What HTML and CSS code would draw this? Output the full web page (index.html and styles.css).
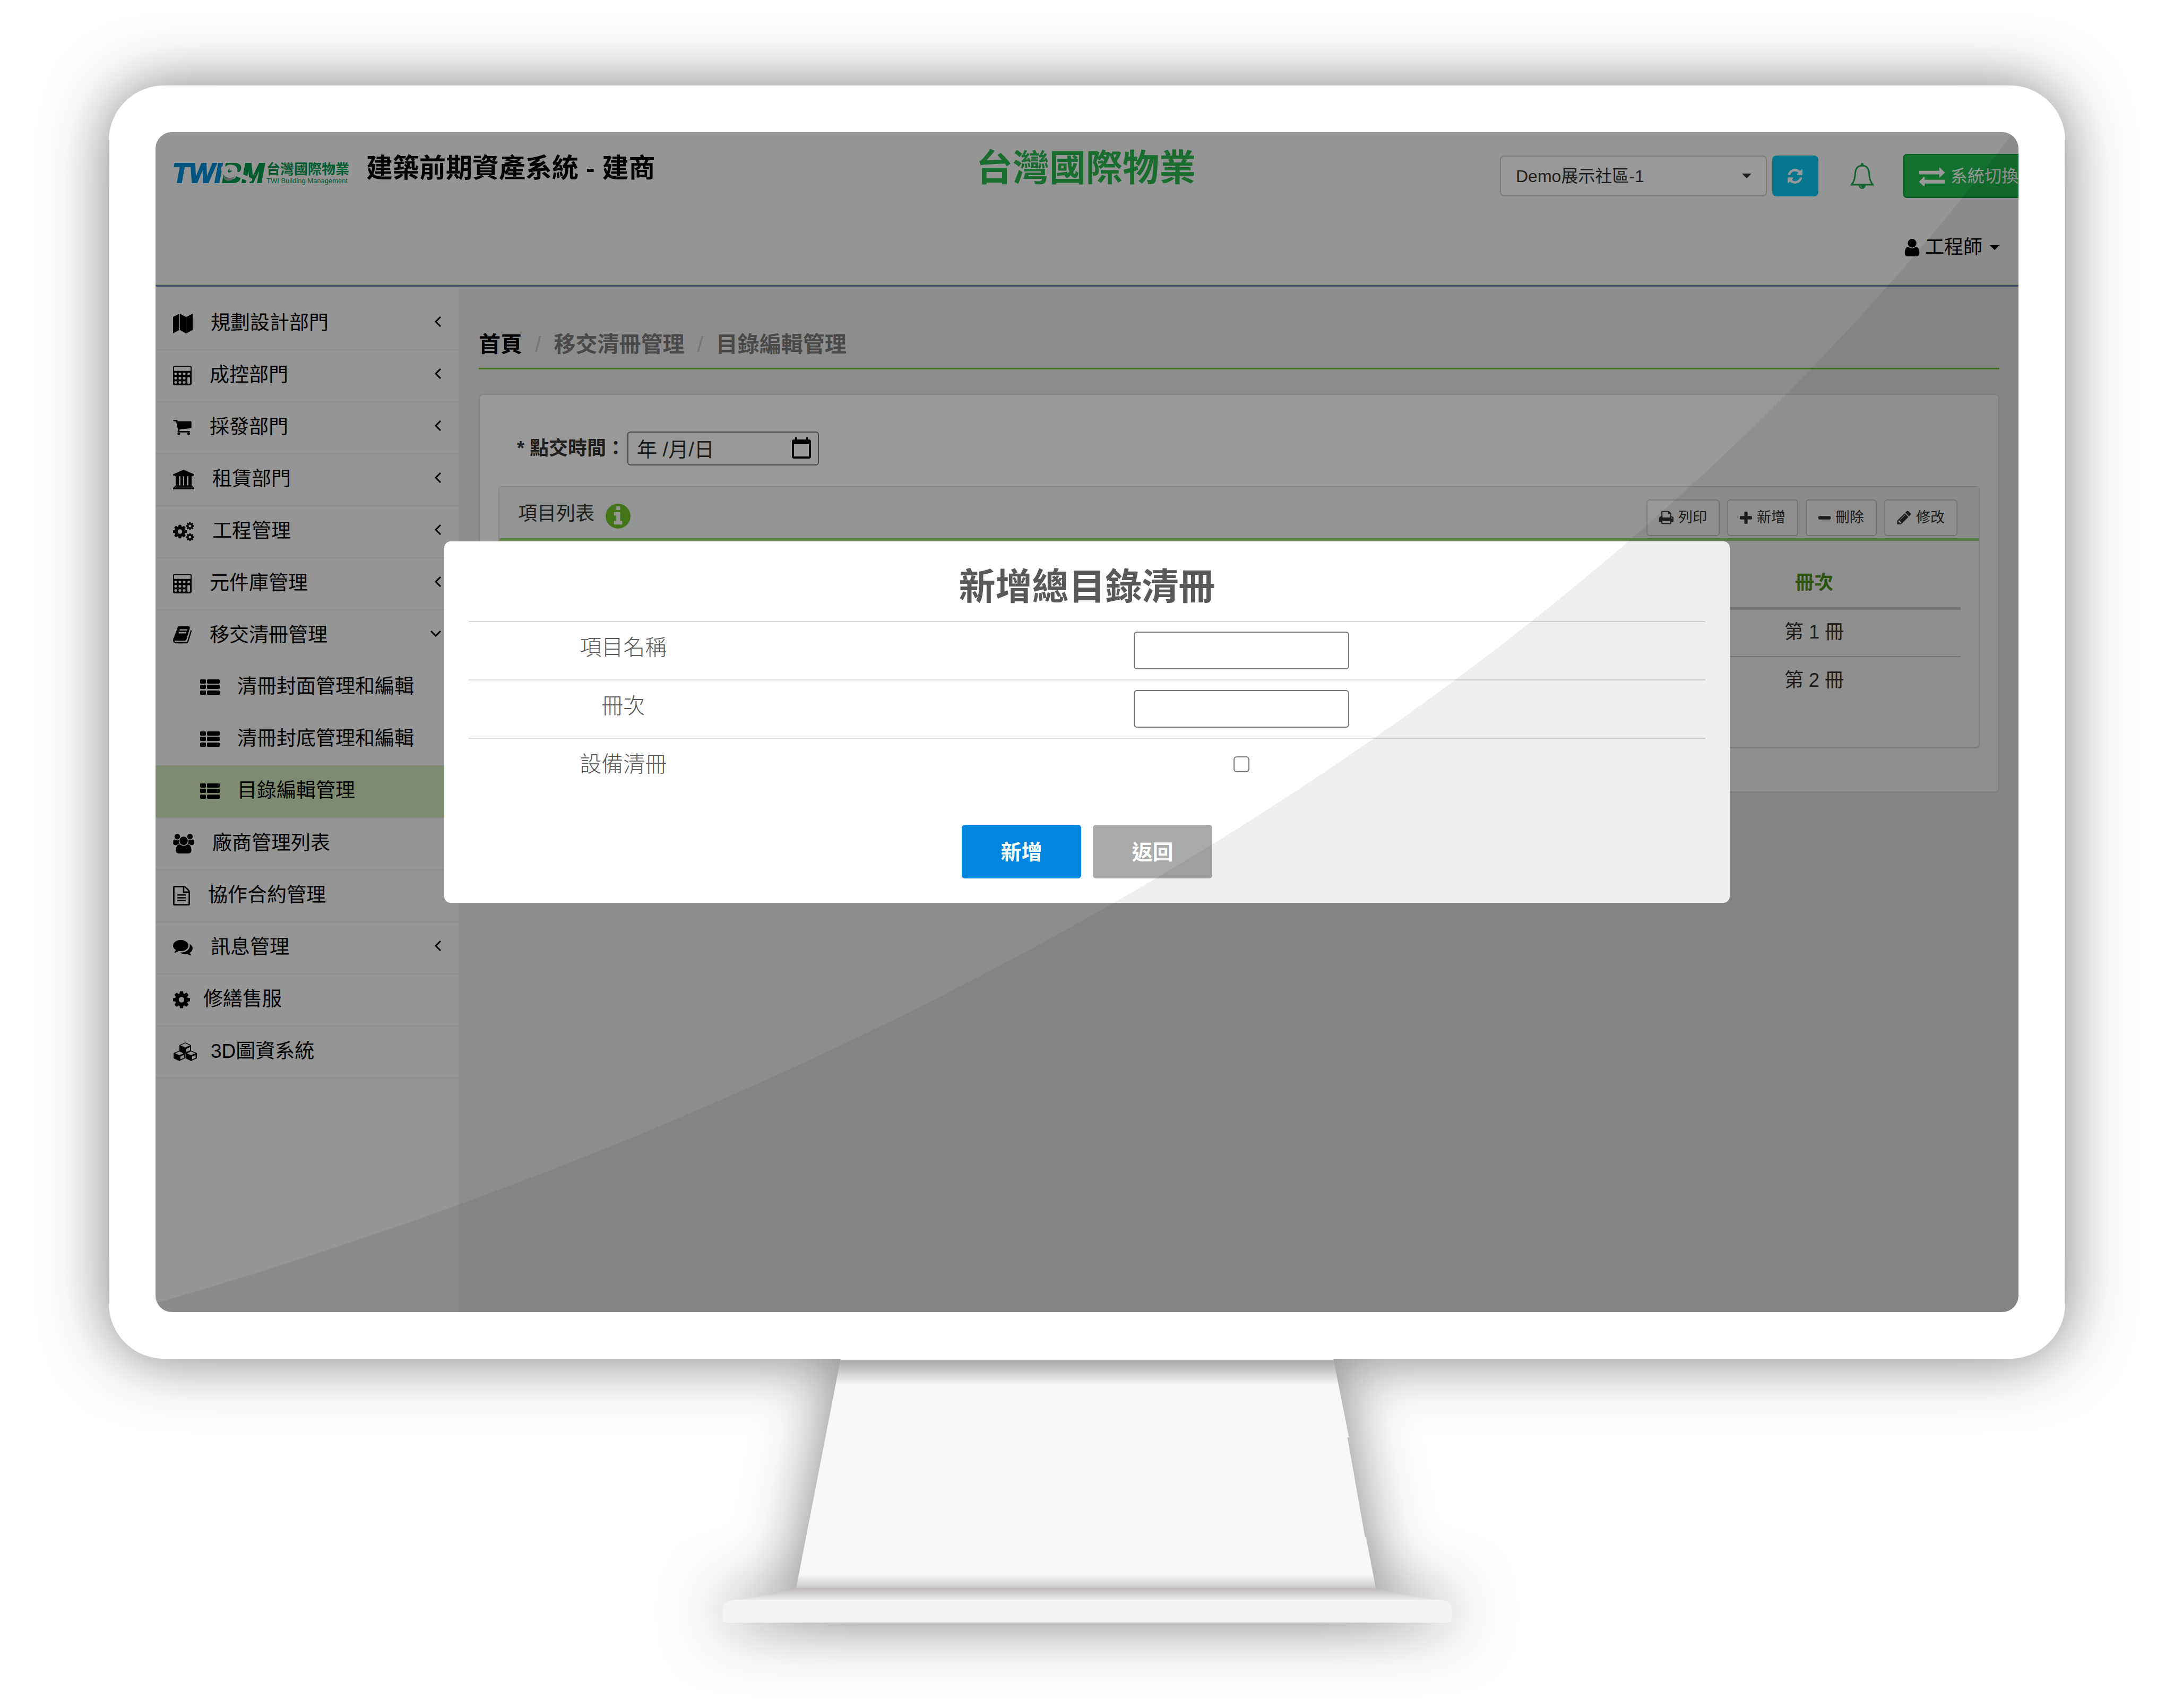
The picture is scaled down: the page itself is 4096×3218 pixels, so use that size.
FILE: index.html
```html
<!DOCTYPE html>
<html lang="zh-Hant">
<head>
<meta charset="utf-8">
<meta name="viewport" content="width=device-width, initial-scale=1">
<title>建築前期資產系統 - 建商</title>
<link rel="stylesheet" href="styles.css">
</head>
<body>
<svg class="sprite" aria-hidden="true">
  <symbol id="cog" viewBox="128 128 1536 1536"><path d="M1152 896q0-106-75-181t-181-75-181 75-75 181 75 181 181 75 181-75 75-181zm512-109v222q0 12-8 23t-20 13l-185 28q-19 54-39 91 35 50 107 138 10 12 10 25t-9 23q-27 37-99 108t-94 71q-12 0-26-9l-138-108q-44 23-91 38-16 136-29 186-7 28-36 28h-222q-14 0-24.500-8.500t-11.500-21.500l-28-184q-49-16-90-37l-141 107q-10 9-25 9-14 0-25-11-126-114-165-168-7-10-7-23 0-12 8-23 15-21 51-66.500t54-70.500q-27-50-41-99l-183-27q-13-2-21-12.500t-8-23.500v-222q0-12 8-23t19-13l186-28q14-46 39-92-40-57-107-138-10-12-10-24 0-10 9-23 26-36 98.500-107.500t94.500-71.500q13 0 26 10l138 107q44-23 91-38 16-136 29-186 7-28 36-28h222q14 0 24.500 8.500t11.500 21.500l28 184q49 16 90 37l142-107q9-9 24-9 13 0 25 10 129 119 165 170 7 8 7 22 0 12-8 23-15 21-51 66.500t-54 70.500q26 50 41 98l183 28q13 2 21 12.500t8 23.500z"/></symbol>
  <symbol id="cogs" viewBox="0 0 40 36"><use href="#cog" x="0" y="5" width="26" height="26"/><use href="#cog" x="24" y="0" width="16" height="15"/><use href="#cog" x="24" y="21" width="16" height="15"/></symbol>
  <symbol id="map" viewBox="0 0 37 30" preserveAspectRatio="none"><path d="M0 5l12-5v25L0 30zM13 0l11 5v25l-11-5zM25 5l12-5v25l-12 5z"/></symbol>
  <symbol id="calculator" viewBox="0 0 35 30" preserveAspectRatio="none"><path fill-rule="evenodd" d="M3 0h29q3 0 3 3v24q0 3-3 3H3q-3 0-3-3V3q0-3 3-3zM3 2q-1 0-1 1v5h31V3q0-1-1-1z"/><g class="keys"><ellipse cx="5" cy="12.500" rx="2.600" ry="2"/><ellipse cx="13" cy="12.500" rx="2.600" ry="2"/><ellipse cx="21" cy="12.500" rx="2.600" ry="2"/><ellipse cx="29.500" cy="12.500" rx="2.600" ry="2"/><ellipse cx="5" cy="19" rx="2.600" ry="2"/><ellipse cx="13" cy="19" rx="2.600" ry="2"/><ellipse cx="21" cy="19" rx="2.600" ry="2"/><ellipse cx="5" cy="25.500" rx="2.600" ry="2"/><ellipse cx="13" cy="25.500" rx="2.600" ry="2"/><ellipse cx="21" cy="25.500" rx="2.600" ry="2"/><rect x="27" y="17" width="5" height="11" rx="2"/></g></symbol>
  <symbol id="cart" viewBox="64 256 1664 1408"><path d="M704 1536q0 52-38 90t-90 38-90-38-38-90 38-90 90-38 90 38 38 90zm896 0q0 52-38 90t-90 38-90-38-38-90 38-90 90-38 90 38 38 90zm128-1088v512q0 24-16.500 42.500t-40.500 21.500l-1044 122q13 60 13 70 0 16-24 64h920q26 0 45 19t19 45-19 45-45 19h-1024q-26 0-45-19t-19-45q0-11 8-31.500t16-36 21.500-40 15.500-29.500l-177-823h-204q-26 0-45-19t-19-45 19-45 45-19h256q16 0 28.500 6.500t19.500 15.500 13 24.500 8 26 5.500 29.500 4.500 26h1201q26 0 45 19t19 45z"/></symbol>
  <symbol id="bank" viewBox="0 0 40 30" preserveAspectRatio="none"><path d="M20 0l20 7v2h-3q0 1-1 1H4q-1 0-1-1H0V7zM5 10h6v14h3V10h5v14h2V10h5v14h3V10h6v14q2 0 2 2H3q0-2 2-2zM1 27h38q1 0 1 1v2H0v-2q0-1 1-1z"/></symbol>
  <symbol id="book" viewBox="60 256 1668 1408"><path d="M1703 478q40 57 18 129l-275 906q-19 64-76.500 107.500t-122.500 43.500h-923q-77 0-148.500-53.500t-99.500-131.500q-24-67-2-127 0-4 3-27t4-37q1-8-3-21.500t-3-19.500q2-11 8-21t16.500-23.500 16.500-23.500q23-38 45-91.500t30-91.500q3-10 .5-30t-.5-28q3-11 17-28t17-23q21-36 42-92t25-90q1-9-2.500-32t.5-28q4-13 22-30.500t22-22.500q19-26 42.500-84.500t27.500-96.500q1-8-3-25.500t-2-26.500q2-8 9-18t18-23 17-21q8-12 16.500-30.500t15-35 16-36 19.500-32 26.500-23.500 36-11.500 47.500 5.500l-1 3q38-9 51-9h761q74 0 114 56t18 130l-274 906q-36 119-71.500 153.500t-128.500 34.500h-869q-27 0-38 15-11 16-1 43 24 70 144 70h923q29 0 56-15.500t35-41.500l300-987q7-22 5-57 38 15 59 43zm-1064 2q-4 13 2 22.500t20 9.500h608q13 0 25.500-9.500t16.500-22.500l21-64q4-13-2-22.500t-20-9.500h-608q-13 0-25.500 9.500t-16.500 22.500zm-83 256q-4 13 2 22.500t20 9.500h608q13 0 25.500-9.500t16.500-22.500l21-64q4-13-2-22.500t-20-9.500h-608q-13 0-25.500 9.500t-16.500 22.500z"/></symbol>
  <symbol id="list" viewBox="0 0 37 29"><rect width="11" height="8" rx="2"/><rect x="13" width="24" height="8" rx="2"/><rect y="10" width="11" height="8" rx="2"/><rect x="13" y="10" width="24" height="8" rx="2"/><rect y="21" width="11" height="8" rx="2"/><rect x="13" y="21" width="24" height="8" rx="2"/></symbol>
  <symbol id="users" viewBox="-64 0 1920 1792"><path d="M529 896q-162 5-265 128h-134q-82 0-138-40.500t-56-118.500q0-353 124-353 6 0 43.500 21t97.500 42.500 119 21.500q67 0 133-23-5 37-5 66 0 143 83 264zm1071 637q0 120-73 189.500t-194 69.500h-874q-121 0-194-69.500t-73-189.500q0-53 3.500-103.500t14-109 26.500-108.500 43-97.500 62-81 85.500-53.500 111.500-20q10 0 43 21.500t73 48 107 48 135 21.500 135-21.500 107-48 73-48 43-21.500q61 0 111.500 20t85.500 53.500 62 81 43 97.500 26.500 108.500 14 109 3.500 103.500zm-1024-1277q0 106-75 181t-181 75-181-75-75-181 75-181 181-75 181 75 75 181zm704 384q0 159-112.500 271.500t-271.500 112.500-271.500-112.500-112.500-271.500 112.500-271.500 271.500-112.500 271.500 112.500 112.500 271.500zm576 225q0 78-56 118.500t-138 40.500h-134q-103-123-265-128 83-121 83-264 0-29-5-66 66 23 133 23 59 0 119-21.500t97.500-42.500 43.500-21q124 0 124 353zm-128-609q0 106-75 181t-181 75-181-75-75-181 75-181 181-75 181 75 75 181z"/></symbol>
  <symbol id="file" viewBox="128 0 1536 1792"><path d="M1596 380q28 28 48 76t20 88v1152q0 40-28 68t-68 28h-1344q-40 0-68-28t-28-68v-1600q0-40 28-68t68-28h896q40 0 88 20t76 48zm-444-244v376h376q-10-29-22-41l-313-313q-12-12-41-22zm384 1528v-1024h-416q-40 0-68-28t-28-68v-416h-768v1536h1280zm-1024-864q0-14 9-23t23-9h704q14 0 23 9t9 23v64q0 14-9 23t-23 9h-704q-14 0-23-9t-9-23v-64zm736 224q14 0 23 9t9 23v64q0 14-9 23t-23 9h-704q-14 0-23-9t-9-23v-64q0-14 9-23t23-9h704zm0 256q14 0 23 9t9 23v64q0 14-9 23t-23 9h-704q-14 0-23-9t-9-23v-64q0-14 9-23t23-9h704z"/></symbol>
  <symbol id="comments" viewBox="0 256 1792 1408"><path d="M1408 768q0 139-94 257t-256.500 186.500-353.500 68.500q-86 0-176-16-124 88-278 128-36 9-86 16h-3q-11 0-20.500-8t-11.500-21q-1-3-1-6.500t.5-6.500 2-6l2.500-5 3.500-5.500 4-5 4.500-5 4-4.500q5-6 23-25t26-29.500 22.500-29 25-38.500 20.500-44q-124-72-195-177t-71-224q0-139 94-257t256.500-186.500 353.500-68.500 353.500 68.500 256.500 186.500 94 257zm384 256q0 120-71 224.500t-195 176.500q10 24 20.500 44t25 38.500 22.500 29 26 29.500 23 25q1 1 4 4.500t4.500 5 4 5 3.500 5.500l2.500 5 2 6 .5 6.500-1 6.500q-3 14-13 22t-22 7q-50-7-86-16-154-40-278-128-90 16-176 16-271 0-472-132 58 4 88 4 161 0 309-45t264-129q125-92 192-212t67-254q0-77-23-152 129 71 204 178t75 230z"/></symbol>
  <symbol id="cubes" viewBox="0 0 46 38"><path d="M12 7l11-5 11 5v11l-11 5-11-5zM1 22L12 17.500 22.500 22v10L12 37 1 32zM23.500 22L34 17.500 45 22v10L34 37 23.500 32z"/><path class="face" d="M14 7.500l9-4 9 4-9 4zM25 14l7-3v6l-7 3zM4 22.500l8-3.500 8 3.500-8 3.500zM14 28.500l6.500-3v5.500l-6.500 3zM26 22.500l8-3.500 8 3.500-8 3.500zM36 28.500l6.500-3v5.500l-6.500 3z"/></symbol>
  <symbol id="refresh" viewBox="128 128 1536 1536"><path d="M1639 1056q0 5-1 7-64 268-268 434.500t-478 166.500q-146 0-282.500-55t-243.500-157l-129 129q-19 19-45 19t-45-19-19-45v-448q0-26 19-45t45-19h448q26 0 45 19t19 45-19 45l-137 137q71 66 161 102t187 36q134 0 250-65t186-179q11-17 53-117 8-23 30-23h192q13 0 22.500 9.500t9.500 22.500zm25-800v448q0 26-19 45t-45 19h-448q-26 0-45-19t-19-45 19-45l138-138q-148-137-349-137-134 0-250 65t-186 179q-11 17-53 117-8 23-30 23h-199q-13 0-22.500-9.500t-9.500-22.500v-7q65-268 270-434.500t480-166.500q146 0 284 55.500t245 156.500l130-129q19-19 45-19t45 19 19 45z"/></symbol>
  <symbol id="bell" viewBox="0 0 45 49"><path class="outline" d="M22.500 5C14 5 10 11 9.500 19 9 30 7 35 2.500 41h40C38 35 36 30 35.500 19 35 11 31 5 22.500 5z"/><path d="M20 5V2.500a2.500 2.500 0 0 1 5 0V5zM16 42h13a6.500 7 0 0 1-13 0z"/><path class="outline thin" d="M19.500 43q.5 3 3 3"/></symbol>
  <symbol id="exchange" viewBox="0 256 1792 1280"><path d="M1792 1184v192q0 13-9.500 22.500t-22.500 9.500h-1376v192q0 13-9.500 22.500t-22.500 9.500q-12 0-24-10l-319-320q-9-9-9-22 0-14 9-23l320-320q9-9 23-9 13 0 22.500 9.500t9.500 22.500v192h1376q13 0 22.500 9.500t9.500 22.500zm0-544q0 14-9 23l-320 320q-9 9-23 9-13 0-22.500-9.500t-9.500-22.500v-192h-1376q-13 0-22.500-9.500t-9.500-22.500v-192q0-13 9.500-22.500t22.500-9.500h1376v-192q0-14 9-23t23-9q12 0 24 10l319 319q9 9 9 23z"/></symbol>
  <symbol id="user" viewBox="256 128 1280 1536"><path d="M1536 1399q0 109-62.500 187t-150.500 78h-854q-88 0-150.500-78t-62.500-187q0-85 8.500-160.500t31.500-152 58.500-131 94-89 134.500-34.500q131 128 313 128t313-128q76 0 134.500 34.500t94 89 58.500 131 31.500 152 8.500 160.500zm-256-887q0 159-112.500 271.500t-271.500 112.500-271.500-112.500-112.500-271.500 112.500-271.500 271.500-112.500 271.500 112.500 112.500 271.500z"/></symbol>
  <symbol id="calendar" viewBox="0 0 36 40"><path fill-rule="evenodd" d="M6 0h4v4h16V0h4v4h2q4 0 4 4v28q0 4-4 4H4q-4 0-4-4V8q0-4 4-4h2zM4 13v23h28V13z"/></symbol>
  <symbol id="info" viewBox="128 128 1536 1536"><path d="M1152 1376v-160q0-14-9-23t-23-9h-96v-512q0-14-9-23t-23-9h-320q-14 0-23 9t-9 23v160q0 14 9 23t23 9h96v320h-96q-14 0-23 9t-9 23v160q0 14 9 23t23 9h448q14 0 23-9t9-23zm-128-896v-160q0-14-9-23t-23-9h-192q-14 0-23 9t-9 23v160q0 14 9 23t23 9h192q14 0 23-9t9-23zm640 416q0 209-103 385.500t-279.500 279.500-385.500 103-385.500-103-279.500-279.500-103-385.500 103-385.500 279.500-279.500 385.500-103 385.500 103 279.500 279.500 103 385.500z"/></symbol>
  <symbol id="print" viewBox="64 128 1664 1536"><path d="M448 1536h896v-256h-896v256zm0-640h896v-384h-160q-40 0-68-28t-28-68v-160h-640v640zm1152 64q0-26-19-45t-45-19-45 19-19 45 19 45 45 19 45-19 19-45zm128 0v416q0 13-9.500 22.500t-22.500 9.500h-224v160q0 40-28 68t-68 28h-960q-40 0-68-28t-28-68v-160h-224q-13 0-22.500-9.500t-9.500-22.500v-416q0-79 56.500-135.500t135.500-56.500h64v-544q0-40 28-68t68-28h672q40 0 88 20t76 48l152 152q28 28 48 76t20 88v256h64q79 0 135.500 56.500t56.500 135.500z"/></symbol>
  <symbol id="plus" viewBox="192 128 1408 1408"><path d="M1600 736v192q0 40-28 68t-68 28h-416v416q0 40-28 68t-68 28h-192q-40 0-68-28t-28-68v-416h-416q-40 0-68-28t-28-68v-192q0-40 28-68t68-28h416v-416q0-40 28-68t68-28h192q40 0 68 28t28 68v416h416q40 0 68 28t28 68z"/></symbol>
  <symbol id="minus" viewBox="192 128 1408 1408"><rect x="192" y="640" width="1408" height="384" rx="96"/></symbol>
  <symbol id="pencil" viewBox="128 128 1536 1536"><path d="M491 1536l91-91-235-235-91 91v107h128v128h107zm523-928q0-22-22-22-10 0-17 7l-542 542q-7 7-7 17 0 22 22 22 10 0 17-7l542-542q7-7 7-17zm-54-192l416 416-832 832h-416v-416zm683 96q0 53-37 90l-166 166-416-416 166-165q36-38 90-38 53 0 91 38l235 234q37 39 37 91z"/></symbol>
  <symbol id="left" viewBox="0 0 12 20"><path class="stroke" d="M11 1L2 10l9 9"/></symbol>
  <symbol id="down" viewBox="0 0 20 12"><path class="stroke" d="M1 1l9 9 9-9"/></symbol>
</svg>

<div class="monitor">
  <div class="screen">
    <header class="topbar">
      <div class="topbar-main">
        <div class="brand">
          <a class="logo" href="#">
            <span class="logo-mark"><span class="logo-twi">TWI</span><span class="logo-bm">BM</span>
              <svg class="logo-key" viewBox="0 0 62 36" aria-hidden="true"><path class="key-shadow" d="M6 22q7 8 20 2l4-5-6 10q-6 4-13 2-5-3-5-9z"/><path class="key" fill-rule="evenodd" d="M1 9q0-5 5-5l3 1Q17-1 25 2q9 3 7 12l25 12q4 1 3 5-2 3-6 2L27 22q-7 6-15 3-6-2-7-10-4-1-4-6zm15 7q4 0 7-4 2-4-1-5-4 0-7 4-2 4 1 5z"/></svg>
            </span>
            <span class="logo-text"><b>台灣國際物業</b><small>TWI Building Management</small></span>
          </a>
          <h1 class="app-title">建築前期資產系統 - 建商</h1>
        </div>
        <h2 class="company">台灣國際物業</h2>
        <div class="controls">
          <select class="site-select" aria-label="社區"><option>Demo展示社區-1</option></select>
          <button class="refresh" type="button" aria-label="重新整理"><svg class="i-refresh"><use href="#refresh"/></svg></button>
          <button class="bell" type="button" aria-label="通知"><svg class="i-bell"><use href="#bell"/></svg></button>
          <button class="switch" type="button"><svg class="i-exchange"><use href="#exchange"/></svg>系統切換</button>
        </div>
      </div>
      <a class="user-menu" href="#"><svg class="i-user"><use href="#user"/></svg>工程師<span class="caret"></span></a>
    </header>

    <div class="columns">
      <nav class="sidebar">
        <ul class="menu">
          <li><a href="#"><svg class="w-37"><use href="#map"/></svg>規劃設計部門<svg class="chevron"><use href="#left"/></svg></a></li>
          <li><a href="#"><svg class="w-35"><use href="#calculator"/></svg>成控部門<svg class="chevron"><use href="#left"/></svg></a></li>
          <li><a href="#"><svg class="w-35 low"><use href="#cart"/></svg>採發部門<svg class="chevron"><use href="#left"/></svg></a></li>
          <li><a href="#"><svg class="w-40"><use href="#bank"/></svg>租賃部門<svg class="chevron"><use href="#left"/></svg></a></li>
          <li><a href="#"><svg class="w-40"><use href="#cogs"/></svg>工程管理<svg class="chevron"><use href="#left"/></svg></a></li>
          <li><a href="#"><svg class="w-35"><use href="#calculator"/></svg>元件庫管理<svg class="chevron"><use href="#left"/></svg></a></li>
          <li class="open"><a href="#"><svg class="w-35"><use href="#book"/></svg>移交清冊管理<svg class="chevron wide"><use href="#down"/></svg></a>
            <ul class="submenu">
              <li><a href="#"><svg class="w-37"><use href="#list"/></svg>清冊封面管理和編輯</a></li>
              <li><a href="#"><svg class="w-37"><use href="#list"/></svg>清冊封底管理和編輯</a></li>
              <li class="active"><a href="#"><svg class="w-37"><use href="#list"/></svg>目錄編輯管理</a></li>
            </ul>
          </li>
          <li><a href="#"><svg class="w-40"><use href="#users"/></svg>廠商管理列表</a></li>
          <li><a href="#"><svg class="w-32"><use href="#file"/></svg>協作合約管理</a></li>
          <li><a href="#"><svg class="w-37"><use href="#comments"/></svg>訊息管理<svg class="chevron"><use href="#left"/></svg></a></li>
          <li><a class="tight" href="#"><svg class="w-32"><use href="#cog"/></svg>修繕售服</a></li>
          <li><a class="tight" href="#"><svg class="w-46"><use href="#cubes"/></svg>3D圖資系統</a></li>
        </ul>
      </nav>

      <main class="content">
        <ol class="breadcrumb">
          <li><a href="#">首頁</a></li>
          <li>移交清冊管理</li>
          <li>目錄編輯管理</li>
        </ol>
        <section class="panel">
          <div class="date-row">
            <label for="handover">* 點交時間：</label>
            <div class="date-field"><input id="handover" type="text" value="年 /月/日"><svg class="i-calendar" aria-hidden="true"><use href="#calendar"/></svg></div>
          </div>
          <div class="card">
            <div class="card-head">
              <h3>項目列表</h3><svg class="i-info"><use href="#info"/></svg>
              <div class="actions">
                <button type="button"><svg><use href="#print"/></svg>列印</button>
                <button type="button"><svg class="small"><use href="#plus"/></svg>新增</button>
                <button type="button"><svg class="small"><use href="#minus"/></svg>刪除</button>
                <button type="button"><svg><use href="#pencil"/></svg>修改</button>
              </div>
            </div>
            <div class="card-body">
              <table class="items">
                <thead><tr><td></td><th scope="col">冊次</th></tr></thead>
                <tbody>
                  <tr><td></td><td>第 1 冊</td></tr>
                  <tr><td></td><td>第 2 冊</td></tr>
                </tbody>
              </table>
            </div>
          </div>
        </section>
      </main>
    </div>

    <div class="backdrop">
      <form class="modal" role="dialog" aria-labelledby="dialog-title">
        <h2 id="dialog-title">新增總目錄清冊</h2>
        <div class="field"><label for="item-name">項目名稱</label><div class="value"><input class="text" id="item-name" type="text"></div></div>
        <div class="field"><label for="volume">冊次</label><div class="value"><input class="text" id="volume" type="text"></div></div>
        <div class="field"><label for="equipment">設備清冊</label><div class="value"><input class="check" id="equipment" type="checkbox"></div></div>
        <div class="buttons">
          <button class="primary" type="button">新增</button>
          <button class="secondary" type="button">返回</button>
        </div>
      </form>
    </div>

    <svg class="glare" viewBox="0 0 3600 2280" preserveAspectRatio="none" aria-hidden="true"><path d="M3590 0C2745 1126 1383 1863 0 2263V2280H3600V0z"/></svg>
  </div>
</div>

<div class="stand">
  <svg viewBox="0 0 1410 510" aria-hidden="true">
    <defs>
      <linearGradient id="neck" x1="0" y1="0" x2="0" y2="1">
        <stop offset="0" stop-color="#a6a6a6"/><stop offset=".05" stop-color="#c8c8c8"/><stop offset=".11" stop-color="#f7f7f7"/>
        <stop offset=".94" stop-color="#f7f7f7"/><stop offset="1" stop-color="#c8c8c8"/>
      </linearGradient>
      <linearGradient id="plate" x1="0" y1="0" x2="0" y2="1">
        <stop offset="0" stop-color="#bfbbbc"/><stop offset="1" stop-color="#f0eeef"/>
      </linearGradient>
    </defs>
    <path fill="url(#neck)" d="M228 1H1181L1211 152H1208L1242 345H1244L1263 444H142z"/>
    <path fill="url(#plate)" d="M142 444H1263Q1330 460 1388 468H22Q80 460 142 444z"/>
    <path fill="#f4f2f3" d="M24 466H1386Q1410 468 1410 482V506Q1410 510 1406 510H4Q0 510 0 506V482Q0 468 24 466z"/>
    <path fill="#fff" d="M228 0H1181V3H228z"/>
  </svg>
</div>
</body>
</html>
```
FILE: styles.css
```css
* { box-sizing: border-box; }

body {
  margin: 0;
  padding: 161px 205px;
  background: #fff;
  color: #333;
  font-family: "Liberation Sans", "Noto Sans CJK TC", sans-serif;
  font-size: 36px;
  line-height: 50px;
}

h1, h2, h3, ul, ol { margin: 0; padding: 0; }
ul, ol { list-style: none; }
a { color: #000; text-decoration: none; }
button, input, select { font: inherit; color: inherit; }
button { cursor: pointer; }
svg { flex: none; fill: currentColor; }
.sprite { position: absolute; width: 0; height: 0; }
.stroke { fill: none; stroke: currentColor; stroke-width: 3; }
.outline { fill: none; stroke: currentColor; stroke-width: 3; }
.thin { stroke: #fff; stroke-width: 1; }
.keys, .face { fill: #f8f8f8; }

/* Monitor */
.monitor {
  padding: 88px;
  border-radius: 104px;
  background: #fff;
  box-shadow: 0 0 118px rgba(0, 0, 0, .5);
}
.screen {
  position: relative;
  display: flex;
  flex-direction: column;
  aspect-ratio: 3510 / 2223;
  border-radius: 31px;
  overflow: hidden;
  background: #ebebeb;
}
.stand {
  display: flex;
  justify-content: center;
  clip-path: inset(0 0 -160px 0);
}
.stand svg {
  width: 1375px;
  height: 497px;
  filter: drop-shadow(0 0 59px rgba(0, 0, 0, .5));
}

/* Top bar */
.topbar {
  display: flex;
  flex-direction: column;
  padding: 34px 36px 0 32px;
  min-height: 291px;
  background: #f8f8f8;
  border-bottom: 3px solid #758cbe;
  box-shadow: inset 0 -2px #daeec0;
}
.topbar-main {
  display: grid;
  grid-template-columns: 1fr auto 1fr;
  height: 92px;
}
.brand { display: flex; gap: 32px; }
.logo { display: flex; gap: 3px; margin-top: 21px; }
.logo-mark {
  position: relative;
  width: 174px;
  font-size: 51px;
  font-weight: bold;
  font-style: italic;
  line-height: 46px;
  white-space: nowrap;
  -webkit-text-stroke: 2px currentColor;
}
.logo-twi { color: #008cd5; }
.logo-bm { color: #00994d; }
.logo-key { position: absolute; left: 90px; top: 5px; width: 62px; height: 36px; }
.key { fill: #f8f8f8; }
.key-shadow { fill: #aaa; }
.logo-text { display: flex; flex-direction: column; width: 156px; color: #00994d; white-space: nowrap; }
.logo-text b { font-size: 26px; line-height: 30px; }
.logo-text small { font-size: 13px; line-height: 14px; }
.app-title { color: #000; font-size: 50px; line-height: 68px; }
.company { color: #2ab64e; font-size: 69px; line-height: 70px; }
.controls {
  display: flex;
  align-items: center;
  justify-content: flex-end;
  padding-top: 5px;
  margin-right: -67px;
}
.site-select {
  width: 503px;
  height: 77px;
  padding: 0 28px;
  border: 2px solid #ccc;
  border-radius: 8px;
  appearance: none;
  background: #fff url("data:image/svg+xml,%3Csvg xmlns='http://www.w3.org/2000/svg' viewBox='0 0 18 9'%3E%3Cpath fill='%23333' d='M0 0h18l-9 9z'/%3E%3C/svg%3E") no-repeat right 27px center / 18px 9px;
  font-size: 32px;
}
.refresh {
  width: 87px;
  height: 77px;
  margin-left: 10px;
  padding: 0;
  border: 0;
  border-radius: 8px;
  background: #0ac6ed;
  color: #fff;
}
.bell { width: 105px; margin: 0 24px 0 30px; padding: 0; border: 0; background: none; color: #1ea34b; }
.switch {
  display: flex;
  align-items: center;
  gap: 11px;
  height: 83px;
  padding: 0 29px;
  border: 2px solid #0ca037;
  border-radius: 8px;
  background: #1ebc4d;
  color: #fff;
  font-size: 32px;
  white-space: nowrap;
}
.refresh svg, .bell svg { display: block; margin: auto; }
.i-refresh { width: 28px; height: 28px; }
.i-bell { width: 45px; height: 49px; }
.i-exchange { width: 48px; height: 38px; }
.user-menu { display: flex; align-items: center; align-self: flex-end; margin-top: 66px; }
.i-user { width: 29px; height: 33px; margin-right: 10px; }
.caret { margin-left: 14px; border: 9px solid transparent; border-top: 9px solid #000; border-bottom: 0; }

/* Sidebar */
.columns { display: flex; flex: 1; }
.sidebar { width: 573px; padding-top: 22px; background: #f8f8f8; border-right: 2px solid #eee; }
.menu > li { border-bottom: 2px solid #ebebeb; }
.menu a {
  display: flex;
  align-items: center;
  gap: 34px;
  height: 96px;
  padding: 0 33px 2px;
  font-size: 37px;
  white-space: nowrap;
}
.menu a.tight { gap: 25px; }
.submenu a { gap: 33px; height: 98px; padding-left: 84px; }
.submenu .active { background: #d2e8bb; }
.menu svg { height: 37px; }
.menu svg.low { height: 29px; }
.menu .w-32 { width: 32px; }
.menu .w-35 { width: 35px; }
.menu .w-37 { width: 37px; }
.menu .w-40 { width: 40px; }
.menu .w-46 { width: 46px; height: 38px; }
.menu .chevron { width: 12px; height: 20px; margin: 0 0 6px auto; }
.menu .chevron.wide { width: 20px; height: 12px; }

/* Content */
.content { flex: 1; padding: 84px 36px 0; }
.breadcrumb {
  display: flex;
  height: 72px;
  border-bottom: 3px solid #7bc930;
  color: #7b7b7b;
  font-size: 41px;
  font-weight: bold;
}
.breadcrumb li + li::before { content: "/"; padding: 0 24px; color: #c4c4c4; font-weight: normal; }
.panel {
  margin-top: 46px;
  padding: 69px 35px 81px;
  border: 2px solid #dfdfdf;
  border-bottom-width: 3px;
  border-radius: 8px;
  background: #fff;
}
.date-row { display: flex; align-items: center; gap: 4px; padding-left: 35px; }
.date-row label { font-weight: bold; white-space: nowrap; }
.date-field { position: relative; }
.date-field input {
  display: block;
  width: 361px;
  height: 64px;
  padding: 0 16px 4px;
  border: 2px solid #767676;
  border-radius: 6px;
  background: #fff;
  font-size: 38px;
}
.i-calendar { position: absolute; right: 15px; top: 11px; width: 36px; height: 40px; color: #000; }
.card { margin-top: 39px; border: 2px solid #dcdcdc; border-radius: 8px; }
.card-head {
  display: flex;
  align-items: center;
  gap: 21px;
  height: 101px;
  padding: 4px 40px 0 35px;
  border-bottom: 5px solid #9ada6e;
  background: #f4f8f5;
}
.card-head h3 { font-size: 36px; font-weight: normal; }
.i-info { width: 47px; height: 47px; margin-top: 8px; color: #71c428; }
.actions { display: flex; gap: 14px; margin: 14px 0 0 auto; }
.actions button {
  display: flex;
  align-items: center;
  gap: 9px;
  height: 69px;
  padding: 0 22px;
  border: 2px solid #ccc;
  border-radius: 6px;
  background: #fff;
  font-size: 27px;
}
.actions svg { width: 27px; height: 26px; }
.actions svg.small { width: 23px; height: 23px; }
.card-body { padding: 36px 34px 80px; }
.items { width: 100%; border-collapse: collapse; table-layout: fixed; text-align: center; }
.items th, .items td { height: 91px; padding: 0 0 2px; border-top: 2px solid #cfcfcf; }
.items th, .items td:last-child { width: 552px; }
.items thead th, .items thead td { border-top: 0; border-bottom: 5px solid #cfcfcf; }
.items tbody tr:first-child td { border-top: 0; }
.items th { color: #50961b; }

/* Dialog */
.backdrop {
  position: absolute;
  inset: 0;
  display: flex;
  align-items: center;
  justify-content: center;
  background: rgba(0, 0, 0, .4);
}
.modal {
  width: 69%;
  padding: 41px 46px 46px;
  border-radius: 12px;
  background: #fff;
  color: #595959;
}
.modal h2 { height: 109px; font-size: 69px; line-height: 92px; text-align: center; }
.field {
  display: grid;
  grid-template-columns: 1fr 3fr;
  height: 110px;
  padding-top: 18px;
  border-top: 2px solid #dcdcdc;
  text-align: center;
}
.field label { font-size: 41px; font-weight: 300; line-height: 60px; }
.text { width: 406px; height: 71px; border: 2px solid #767676; border-radius: 6px; background: #fff; }
.value { display: flex; justify-content: center; align-items: flex-start; }
.check {
  width: 30px;
  height: 30px;
  margin: 15px 0 0;
  border: 2px solid #767676;
  border-radius: 6px;
  appearance: none;
  background: #fff;
}
.buttons { display: flex; justify-content: center; gap: 22px; margin-top: 54px; }
.buttons button {
  width: 225px;
  height: 101px;
  padding: 2px 0 0;
  border: 0;
  border-radius: 6px;
  color: #fff;
  font-size: 39px;
  font-weight: bold;
}
.primary { background: #0086df; }
.secondary { background: #aaa; }

.glare { position: absolute; inset: 0; width: 100%; height: 100%; fill: rgba(0, 0, 0, .063); pointer-events: none; }
```
